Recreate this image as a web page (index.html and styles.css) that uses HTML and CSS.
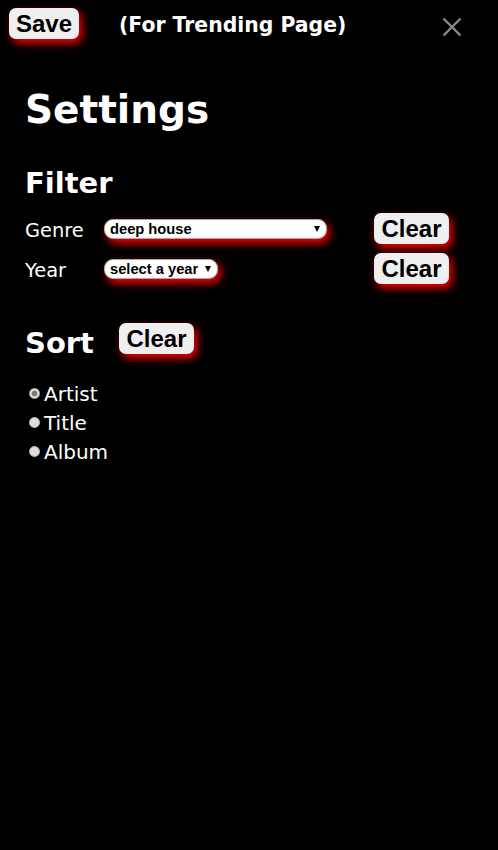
FILE: index.html
```html
<!DOCTYPE html>
<html>
<head>
<meta charset="utf-8">
<link rel="stylesheet" href="styles.css">
</head>
<body>
<div class="header">
  <button class="btn save">Save</button>
  <span class="page-title">(For Trending Page)</span>
  <span class="close" aria-label="close">
    <svg width="20" height="20" viewBox="0 0 20 20"><path d="M1.5 1.5 L18.5 18.5 M18.5 1.5 L1.5 18.5" stroke="#8a8a8a" stroke-width="2.4" fill="none"/></svg>
  </span>
</div>
<div class="content">
  <h1 class="title">Settings</h1>
  <h2 class="section">Filter</h2>
  <div class="filters">
    <span class="label">Genre</span>
    <span class="select-wrap genre"><select class="select"><option>deep house</option></select></span>
    <button class="btn clear">Clear</button>
    <span class="label">Year</span>
    <span class="select-wrap year"><select class="select"><option>select a year</option></select></span>
    <button class="btn clear">Clear</button>
  </div>
  <div class="sort-row">
    <h2 class="section sort">Sort</h2>
    <button class="btn clear">Clear</button>
  </div>
  <div class="radios">
    <label class="radio"><input type="radio" name="sort" checked><span>Artist</span></label>
    <label class="radio"><input type="radio" name="sort"><span>Title</span></label>
    <label class="radio"><input type="radio" name="sort"><span>Album</span></label>
  </div>
</div>
</body>
</html>
```
FILE: styles.css
```css
html, body {
  margin: 0;
  padding: 0;
  background: #000;
  color: #fff;
  font-family: "DejaVu Sans", Verdana, sans-serif;
}
body {
  width: 498px;
  height: 850px;
  overflow: hidden;
}
.header {
  display: flex;
  align-items: center;
  height: 31px;
  padding-top: 8px;
}
.btn {
  font-family: "Liberation Sans", Arial, sans-serif;
  font-weight: bold;
  font-size: 24px;
  line-height: 31px;
  height: 31px;
  padding: 0 7px;
  border: none;
  border-radius: 7px;
  background: #efefef;
  color: #000;
  box-shadow: 3px 4px 8px #f00;
  cursor: pointer;
}
.save {
  margin-left: 9px;
  width: 70px;
}
.page-title {
  margin-left: 40px;
  font-weight: bold;
  font-size: 20.4px;
  line-height: 24px;
  padding-top: 3px;
}
.close {
  margin-left: auto;
  margin-right: 36px;
  display: flex;
  padding-top: 6px;
}
.content {
  padding-left: 25px;
}
.title {
  margin: 47px 0 0;
  font-size: 39px;
  line-height: 48px;
  font-weight: bold;
}
.section {
  margin: 32px 0 0;
  font-size: 29px;
  line-height: 34px;
  font-weight: bold;
}
.filters {
  display: grid;
  grid-template-columns: 79px 270px auto;
  grid-auto-rows: 30px;
  row-gap: 10px;
  align-items: center;
  justify-items: start;
  margin-top: 13px;
}
.label {
  font-size: 19.4px;
  line-height: 30px;
  padding-top: 5px;
}
.select-wrap {
  position: relative;
  display: block;
  height: 20px;
  margin-top: 2px;
}
.select-wrap::after {
  content: "";
  position: absolute;
  top: 7px;
  right: 7px;
  border-left: 3px solid transparent;
  border-right: 3px solid transparent;
  border-top: 6px solid #000;
  pointer-events: none;
}
.select {
  appearance: none;
  -webkit-appearance: none;
  display: block;
  height: 20px;
  margin: 0;
  padding: 1px 0 0 5px;
  border: 1px solid #a8a8a8;
  border-radius: 9px;
  background: #fff;
  color: #000;
  font-family: "Liberation Sans", Arial, sans-serif;
  font-weight: bold;
  font-size: 14.7px;
  line-height: 17px;
  box-shadow: 3px 4px 8px #f00;
}
.genre .select { width: 223px; }
.year .select { width: 114px; }
.clear {
  width: 75px;
}
.sort-row {
  display: flex;
  align-items: flex-start;
  margin-top: 40px;
}
.sort {
  margin: 3px 25px 0 0;
}
.radios {
  margin-top: 20px;
  padding-left: 4px;
}
.radio {
  display: flex;
  align-items: center;
  height: 29px;
  font-size: 20px;
  line-height: 29px;
}
.radio input {
  appearance: none;
  -webkit-appearance: none;
  width: 11px;
  height: 11px;
  margin: 0 4px 3px 0;
  border-radius: 50%;
  border: 1px solid #b5b5b5;
  background: #dedede;
}
.radio input:checked {
  background: radial-gradient(circle, #7a7a7a 0 2.5px, #dedede 3.2px);
}
```
